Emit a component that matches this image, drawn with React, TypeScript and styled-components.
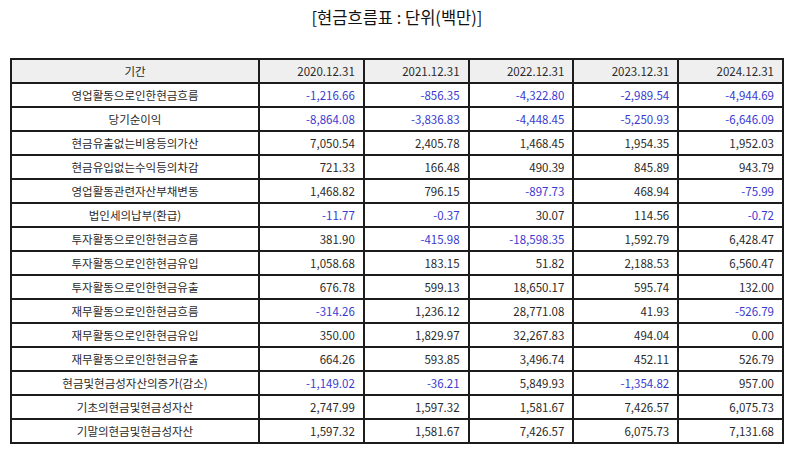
import React from "react";
import styled, { createGlobalStyle } from "styled-components";

const GlobalStyle = createGlobalStyle`
  html, body {
    margin: 0;
    padding: 0;
    background: #fff;
    font-family: "Noto Sans CJK KR", "Noto Sans", sans-serif;
  }
`;

const years = ["2020.12.31", "2021.12.31", "2022.12.31", "2023.12.31", "2024.12.31"];

const rows: [string, string[]][] = [
  ["영업활동으로인한현금흐름", ["-1,216.66", "-856.35", "-4,322.80", "-2,989.54", "-4,944.69"]],
  ["당기순이익", ["-8,864.08", "-3,836.83", "-4,448.45", "-5,250.93", "-6,646.09"]],
  ["현금유출없는비용등의가산", ["7,050.54", "2,405.78", "1,468.45", "1,954.35", "1,952.03"]],
  ["현금유입없는수익등의차감", ["721.33", "166.48", "490.39", "845.89", "943.79"]],
  ["영업활동관련자산부채변동", ["1,468.82", "796.15", "-897.73", "468.94", "-75.99"]],
  ["법인세의납부(환급)", ["-11.77", "-0.37", "30.07", "114.56", "-0.72"]],
  ["투자활동으로인한현금흐름", ["381.90", "-415.98", "-18,598.35", "1,592.79", "6,428.47"]],
  ["투자활동으로인한현금유입", ["1,058.68", "183.15", "51.82", "2,188.53", "6,560.47"]],
  ["투자활동으로인한현금유출", ["676.78", "599.13", "18,650.17", "595.74", "132.00"]],
  ["재무활동으로인한현금흐름", ["-314.26", "1,236.12", "28,771.08", "41.93", "-526.79"]],
  ["재무활동으로인한현금유입", ["350.00", "1,829.97", "32,267.83", "494.04", "0.00"]],
  ["재무활동으로인한현금유출", ["664.26", "593.85", "3,496.74", "452.11", "526.79"]],
  ["현금및현금성자산의증가(감소)", ["-1,149.02", "-36.21", "5,849.93", "-1,354.82", "957.00"]],
  ["기초의현금및현금성자산", ["2,747.99", "1,597.32", "1,581.67", "7,426.57", "6,075.73"]],
  ["기말의현금및현금성자산", ["1,597.32", "1,581.67", "7,426.57", "6,075.73", "7,131.68"]],
];

const Page = styled.div`
  padding: 0 10px;
`;

const Title = styled.h1`
  margin: 0;
  height: 58px;
  padding-top: 4px;
  box-sizing: border-box;
  text-align: center;
  font-size: 16.5px;
  font-weight: 400;
  line-height: 26px;
  color: #111;
`;

const Table = styled.table`
  width: 774px;
  border-collapse: separate;
  border-spacing: 0;
  table-layout: fixed;
  font-size: 11.5px;
  color: #2a2a2a;
  border-top: 2px solid #1c1c1c;
  border-left: 2px solid #1c1c1c;

  th,
  td {
    height: 22px;
    padding: 0 8px;
    border-right: 2px solid #1c1c1c;
    border-bottom: 2px solid #1c1c1c;
    font-weight: 400;
    white-space: nowrap;
  }
`;

const HeadCell = styled.th<{ $first?: boolean }>`
  background: #efefef;
  text-align: ${(p) => (p.$first ? "center" : "right")};
  width: ${(p) => (p.$first ? "230px" : "auto")};
`;

const LabelCell = styled.td`
  text-align: center;
`;

const ValueCell = styled.td<{ $neg: boolean }>`
  text-align: right;
  color: ${(p) => (p.$neg ? "#3a3ad0" : "#2a2a2a")};
`;

export default function App() {
  return (
    <Page>
      <GlobalStyle />
      <Title>[현금흐름표 : 단위(백만)]</Title>
      <Table>
        <thead>
          <tr>
            <HeadCell $first>기간</HeadCell>
            {years.map((y) => (
              <HeadCell key={y}>{y}</HeadCell>
            ))}
          </tr>
        </thead>
        <tbody>
          {rows.map(([label, values]) => (
            <tr key={label}>
              <LabelCell>{label}</LabelCell>
              {values.map((v, i) => (
                <ValueCell key={i} $neg={v.startsWith("-")}>
                  {v}
                </ValueCell>
              ))}
            </tr>
          ))}
        </tbody>
      </Table>
    </Page>
  );
}
